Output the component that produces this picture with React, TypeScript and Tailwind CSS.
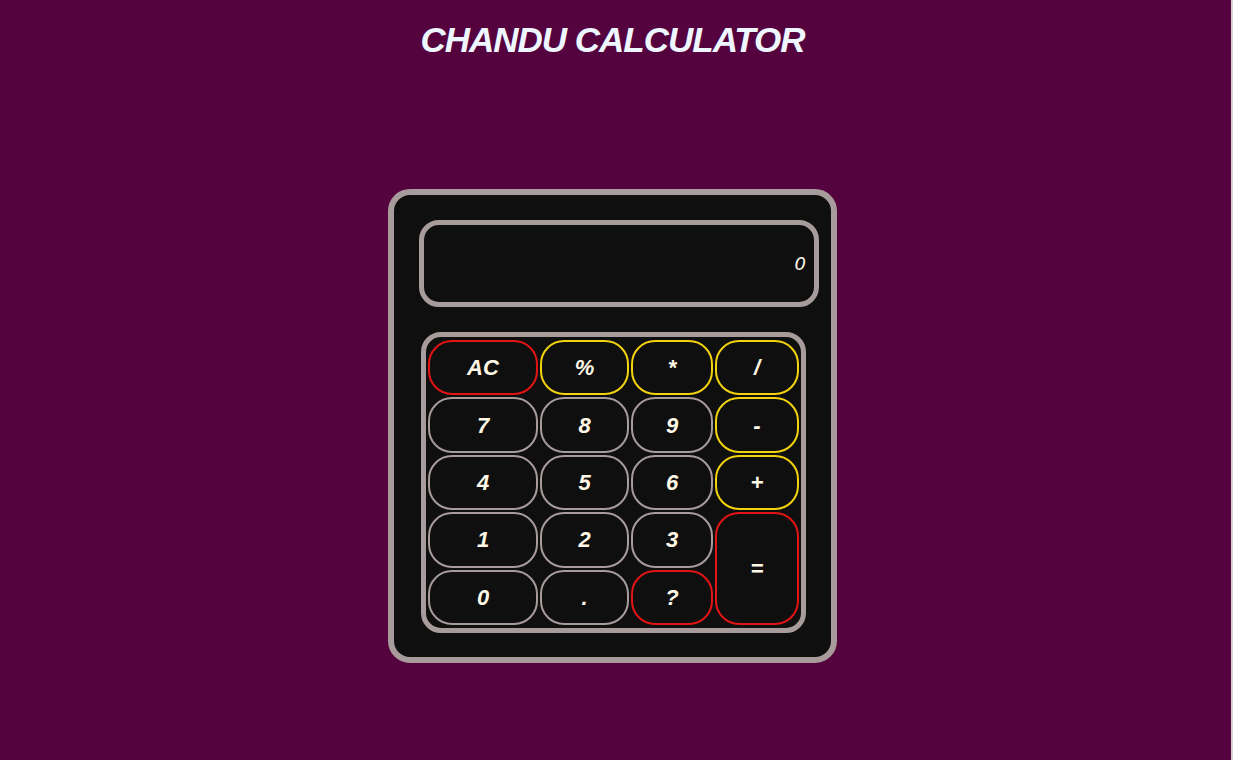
import React from "react";

type Key = { label: string; tone: "red" | "yellow" | "gray"; tall?: boolean };

const keys: Key[] = [
  { label: "AC", tone: "red" },
  { label: "%", tone: "yellow" },
  { label: "*", tone: "yellow" },
  { label: "/", tone: "yellow" },
  { label: "7", tone: "gray" },
  { label: "8", tone: "gray" },
  { label: "9", tone: "gray" },
  { label: "-", tone: "yellow" },
  { label: "4", tone: "gray" },
  { label: "5", tone: "gray" },
  { label: "6", tone: "gray" },
  { label: "+", tone: "yellow" },
  { label: "1", tone: "gray" },
  { label: "2", tone: "gray" },
  { label: "3", tone: "gray" },
  { label: "=", tone: "red", tall: true },
  { label: "0", tone: "gray" },
  { label: ".", tone: "gray" },
  { label: "?", tone: "red" },
];

const toneClass = {
  red: "border-[#e41414]",
  yellow: "border-[#f3d20e]",
  gray: "border-[#a89b9b]",
};

export default function App() {
  return (
    <div className="flex min-h-[760px] w-full bg-[#55033f]">
      <main className="flex flex-1 flex-col items-center pr-[6px] pt-[20px]">
        <h1 className="text-[35px] font-bold italic leading-[40px] tracking-[-1px] text-[#eef6ff] [font-family:'Liberation_Sans',Arial,sans-serif]">
          CHANDU CALCULATOR
        </h1>

        <div className="mt-[129px] flex h-[474px] w-[449px] flex-col rounded-[22px] border-[6px] border-[#a89b9b] bg-[#0f0f0f] pl-[25px] pt-[25px]">
          <div className="flex h-[87px] w-[400px] items-center justify-end rounded-[20px] border-[5px] border-[#a89b9b] pr-[8px] text-[18px] italic text-[#fff8e7] [font-family:'DejaVu_Sans',sans-serif]">
            0
          </div>

          <div className="ml-[2px] mt-[25px] h-[301px] w-[385px] rounded-[20px] border-[5px] border-[#a89b9b] pl-[2px] pt-[3px]">
            <div className="grid grid-cols-[110px_89px_82px_84px] grid-rows-[repeat(5,55.4px)] gap-[2px]">
              {keys.map((k) => (
                <button
                  key={k.label}
                  type="button"
                  className={`flex items-center justify-center rounded-[24px] border-2 bg-[#0f0f0f] text-[22px] font-bold italic text-[#fff8e7] [font-family:'Liberation_Sans',Arial,sans-serif] ${toneClass[k.tone]} ${k.tall ? "row-span-2" : ""}`}
                >
                  {k.label}
                </button>
              ))}
            </div>
          </div>
        </div>
      </main>
      <div className="w-[2px] bg-[#d6d2d4]" />
    </div>
  );
}
